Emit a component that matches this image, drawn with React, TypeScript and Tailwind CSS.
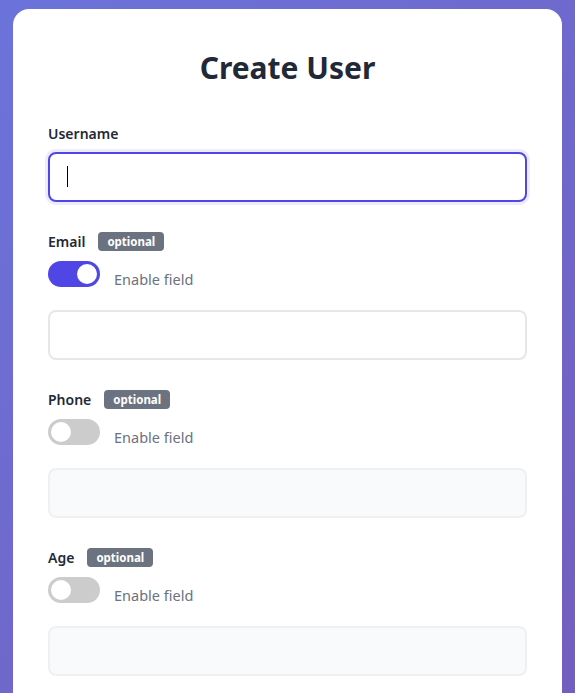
import React, { useState } from "react";

function Toggle({ on }: { on: boolean }) {
  return (
    <div
      className={
        on
          ? "relative h-[26px] w-[52px] shrink-0 rounded-full bg-[#4f46e5]"
          : "relative h-[26px] w-[52px] shrink-0 rounded-full bg-[#cccccc]"
      }
    >
      <div
        className={
          on
            ? "absolute top-[3px] left-[29px] h-[20px] w-[20px] rounded-full bg-white"
            : "absolute top-[3px] left-[3px] h-[20px] w-[20px] rounded-full bg-white"
        }
      />
    </div>
  );
}

function OptionalField({ label, on }: { label: string; on: boolean }) {
  return (
    <div className="mt-[30px]">
      <div className="flex h-[19px] items-center gap-[13px]">
        <span className="text-[14px] font-semibold text-[#1f2937]">{label}</span>
        <span className="flex h-[19px] items-center rounded-[4px] bg-[#6b7280] px-[9px] text-[11.5px] font-bold text-white">
          optional
        </span>
      </div>
      <div className="mt-[10px] flex items-start gap-[14px]">
        <Toggle on={on} />
        <span className="mt-[8px] text-[14.5px] leading-[20px] text-[#6b7280]">Enable field</span>
      </div>
      <input
        disabled={!on}
        className={
          on
            ? "mt-[21px] block h-[50px] w-full rounded-[8px] border-2 border-[#e5e7eb] bg-white px-[16px] text-[15px] outline-none"
            : "mt-[21px] block h-[50px] w-full rounded-[8px] border-2 border-[#eef0f2] bg-[#f9fafb] px-[16px] text-[15px] outline-none"
        }
      />
    </div>
  );
}

export default function App() {
  const [name, setName] = useState("");
  return (
    <div
      className="min-h-[693px] w-full bg-[linear-gradient(135deg,#6b73da_0%,#735dbd_100%)] pt-[9px] pb-10"
      style={{ fontFamily: '"Noto Sans", "Open Sans", sans-serif' }}
    >
      <div className="mx-auto w-[549px] rounded-[16px] bg-white px-[35px] pt-[35px] pb-10">
        <h1 className="text-center text-[30px] leading-[48px] font-bold text-[#1f2937]">Create User</h1>
        <div className="mt-[32px]">
          <label className="block text-[14px] leading-[20px] font-semibold text-[#1f2937]">Username</label>
          <div className="relative mt-[8px]">
            <input
              value={name}
              onChange={(e) => setName(e.target.value)}
              className="block h-[50px] w-full rounded-[8px] border-2 border-[#4f46e5] bg-white px-[17px] text-[15px] shadow-[0_0_0_3px_rgba(79,70,229,0.1)] outline-none"
            />
            <span className="pointer-events-none absolute top-[14px] left-[19px] h-[21px] w-px bg-black" />
          </div>
        </div>
        <OptionalField label="Email" on={true} />
        <OptionalField label="Phone" on={false} />
        <OptionalField label="Age" on={false} />
      </div>
    </div>
  );
}
